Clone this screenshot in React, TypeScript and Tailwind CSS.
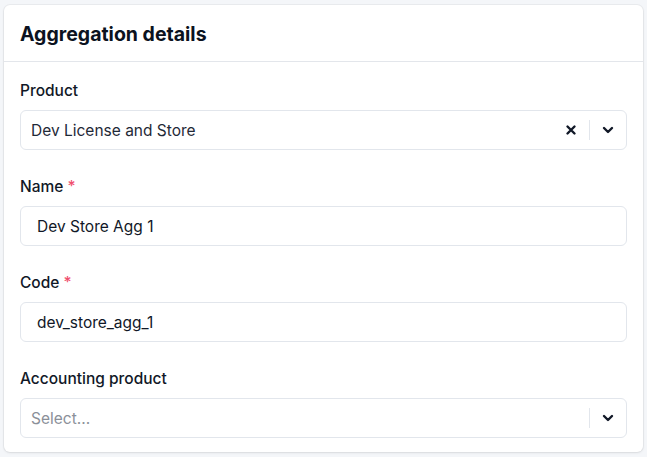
import React from "react";

const font = { fontFamily: "Inter, 'Noto Sans', sans-serif" };

function Chevron() {
  return (
    <svg width="14" height="14" viewBox="0 0 14 14" fill="none">
      <path d="M3 5l4 4 4-4" stroke="#111827" strokeWidth="2.4" strokeLinecap="round" strokeLinejoin="round" />
    </svg>
  );
}

function Cross() {
  return (
    <svg width="12" height="12" viewBox="0 0 12 12" fill="none">
      <path d="M2.5 2.5l7 7M9.5 2.5l-7 7" stroke="#111827" strokeWidth="2.4" strokeLinecap="round" />
    </svg>
  );
}

function Label({ children, required }: { children: React.ReactNode; required?: boolean }) {
  return (
    <div className="h-5 leading-[22px] text-[15.5px] font-medium text-[#111827] mb-2.5">
      {children}
      {required && <span className="text-[#f0506e] ml-1">*</span>}
    </div>
  );
}

export default function App() {
  return (
    <div className="min-h-[457px] w-[647px] bg-[#f4f6f9] pt-[5px] px-1" style={font}>
      <div className="bg-white rounded-md shadow-[0_0_0_1px_rgba(0,0,0,0.04),0_1px_3px_rgba(0,0,0,0.08)]">
        <div className="h-[57px] flex items-center px-4 pt-1 border-b border-[#e3e6eb]">
          <h2 className="text-[19.5px] font-bold text-[#0b1220]">Aggregation details</h2>
        </div>
        <div className="px-4 pt-[18px] pb-[14px] flex flex-col gap-[26px]">
          <div>
            <Label>Product</Label>
            <div className="h-10 border border-[#e2e6ec] rounded-md flex items-center pl-[10px]">
              <span className="flex-1 pt-0.5 text-[15.5px] text-[#1f2937]">Dev License and Store</span>
              <div className="w-9 flex justify-center"><Cross /></div>
              <div className="w-px h-5 bg-[#e2e6ec]" />
              <div className="w-9 flex justify-center"><Chevron /></div>
            </div>
          </div>
          <div>
            <Label required>Name</Label>
            <div className="h-10 border border-[#e2e6ec] rounded-md flex items-center pl-4 pt-0.5 text-[15.5px] text-[#111827]">
              Dev Store Agg 1
            </div>
          </div>
          <div>
            <Label required>Code</Label>
            <div className="h-10 border border-[#e2e6ec] rounded-md flex items-center pl-4 pt-0.5 text-[15.5px] text-[#111827]">
              dev_store_agg_1
            </div>
          </div>
          <div>
            <Label>Accounting product</Label>
            <div className="h-10 border border-[#e2e6ec] rounded-md flex items-center pl-[10px]">
              <span className="flex-1 pt-0.5 text-[15.5px] text-[#8b9099]">Select...</span>
              <div className="w-px h-5 bg-[#e2e6ec]" />
              <div className="w-9 flex justify-center"><Chevron /></div>
            </div>
          </div>
        </div>
      </div>
    </div>
  );
}
